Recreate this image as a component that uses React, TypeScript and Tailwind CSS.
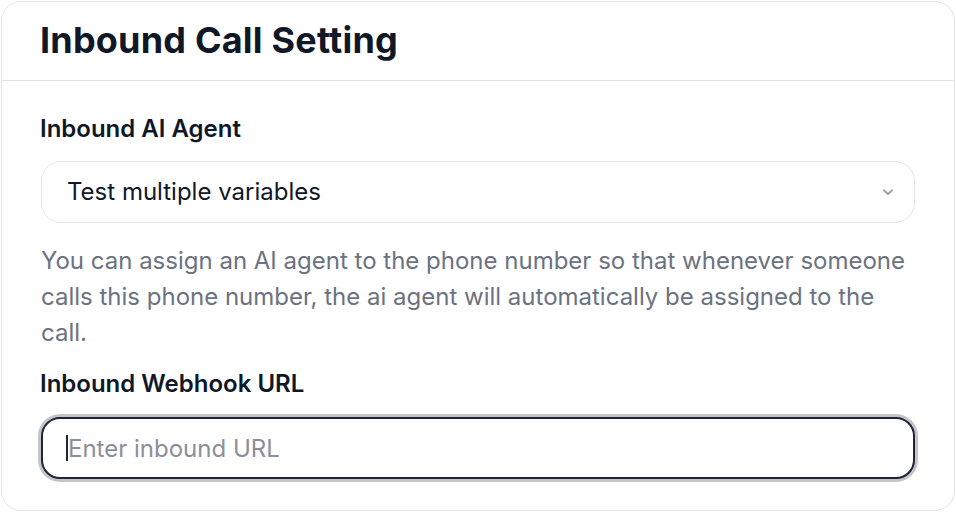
import { useState } from 'react';

// Carte de réglage des appels entrants
export default function App() {
  const [agent, setAgent] = useState('Test multiple variables');
  const [url, setUrl] = useState('');

  return (
    <div className="w-[956px] h-[512px] bg-white p-[1px] font-['Inter','Liberation_Sans',sans-serif]">
      <div className="h-[510px] rounded-[20px] border border-[#e2e3e6] bg-white flex flex-col">
        {/* En-tête */}
        <div className="h-[79px] flex items-center px-[38px] pb-[3px] border-b border-[#e2e3e6]">
          <h1 className="text-[36px] leading-[44px] font-bold text-[#101828] tracking-[0.2px]">
            Inbound Call Setting
          </h1>
        </div>

        {/* Corps */}
        <div className="px-[39px] pt-[32px] flex flex-col">
          <label className="-ml-[1px] text-[24px] leading-[32px] font-semibold text-[#101828]">
            Inbound AI Agent
          </label>

          <div className="mt-[16px] relative">
            <select
              value={agent}
              onChange={(e) => setAgent(e.target.value)}
              className="appearance-none w-full h-[62px] rounded-[20px] border border-[#e2e3e6] bg-white pl-[25px] pr-12 text-[24px] text-[#101828] outline-none"
            >
              <option>Test multiple variables</option>
            </select>
            <svg
              className="absolute right-[20px] top-[24px] pointer-events-none"
              width="14"
              height="14"
              viewBox="0 0 14 14"
              fill="none"
            >
              <path d="M3 5.5 7 9l4-3.5" stroke="#a3a6ad" strokeWidth="2.2" strokeLinecap="round" strokeLinejoin="round" />
            </svg>
          </div>

          <p className="mt-[20px] text-[24px] leading-[36px] text-[#6b7280]">
            You can assign an AI agent to the phone number so that whenever someone calls this phone number, the ai
            agent will automatically be assigned to the call.
          </p>

          <label className="-ml-[1px] mt-[17px] text-[24px] leading-[32px] font-semibold text-[#101828]">
            Inbound Webhook URL
          </label>

          <div className="mt-[17px] relative">
            <input
              value={url}
              onChange={(e) => setUrl(e.target.value)}
              placeholder="Enter inbound URL"
              className="w-full h-[62px] rounded-[19px] border-2 border-[#1e2536] ring-[3px] ring-[#c3c5cb] bg-white px-[25px] text-[24px] text-[#101828] placeholder:text-[#8b8f98] outline-none"
            />
            {/* curseur de saisie */}
            {url === '' && (
              <span className="absolute left-[25px] top-[18px] w-[2px] h-[26px] bg-[#1e2536] pointer-events-none" />
            )}
          </div>
        </div>
      </div>
    </div>
  );
}
